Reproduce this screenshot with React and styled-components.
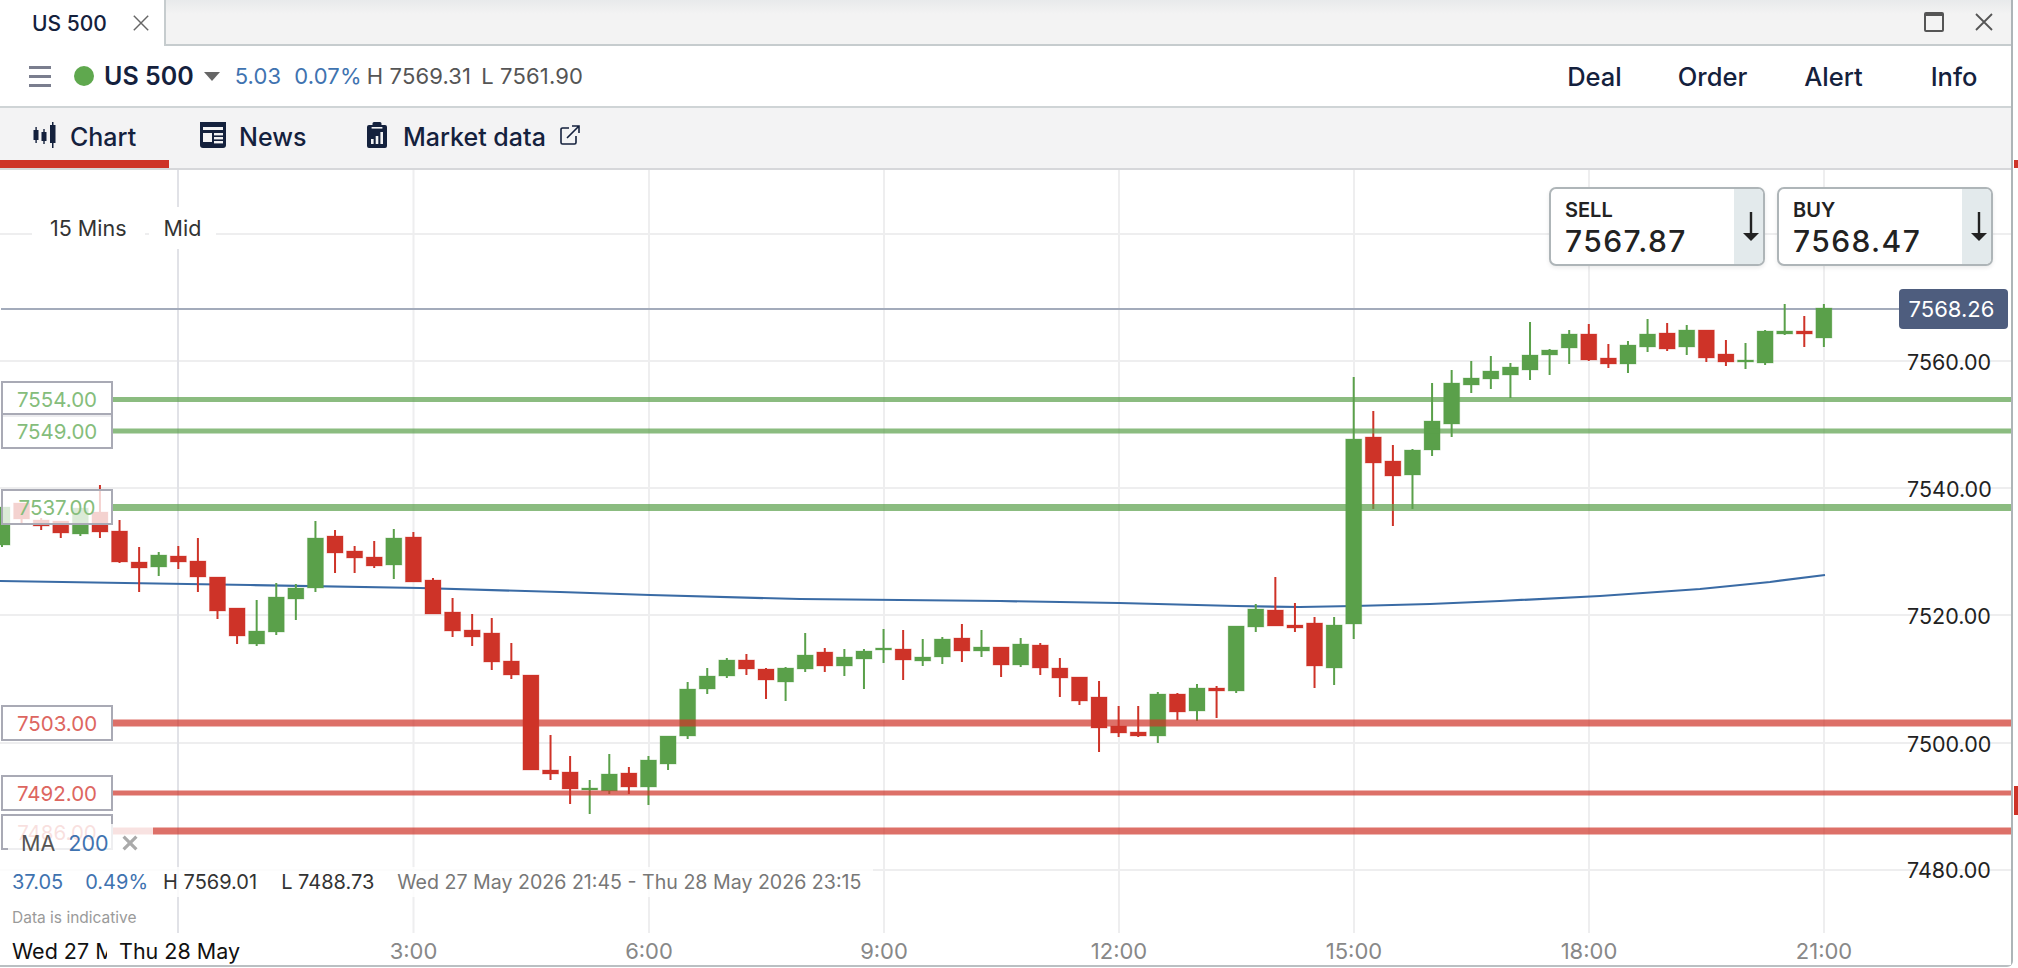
import React from "react";
import styled, { createGlobalStyle } from "styled-components";

const NAVY = "#14213d";
const BLUE = "#3f73b0";
const GREEN = "#5aa04a";
const RED = "#ce3328";

// [direction, body top, body bottom, wick top, wick bottom], page y pixels
const candles = [
  ["g",507,545,507,547],["r",503,519,503,525],["r",520,526,518,530],["r",521,533,521,538],["g",508,534,508,536],
  ["r",512,532,485,538],["r",531,562,520,563],["r",562,568,547,592],["g",555,567,552,576],["r",556,562,546,569],
  ["r",561,577,538,592],["r",577,611,577,619],["r",608,636,608,644],["g",631,644,600,646],["g",597,632,583,635],
  ["g",588,599,584,620],["g",538,588,521,592],["r",536,553,530,573],["r",551,558,546,573],["r",557,566,541,568],
  ["g",538,565,529,579],["r",537,582,532,582],["r",580,614,578,614],["r",612,631,598,637],["r",630,637,614,646],
  ["r",633,662,618,670],["r",661,675,643,679],["r",675,770,675,770],["r",770,774,735,780],["r",772,789,756,804],
  ["g",788,790,780,814],["g",774,791,754,794],["r",773,787,767,794],["g",760,787,756,805],["g",736,764,736,770],
  ["g",689,736,682,739],["g",676,689,668,694],["g",660,676,658,678],["r",660,669,654,675],["r",669,680,668,699],
  ["g",668,682,667,701],["g",655,669,633,672],["r",652,666,648,672],["g",657,666,649,676],["g",651,659,649,689],
  ["g",648,650,629,663],["r",649,660,630,680],["g",657,661,639,666],["g",639,657,637,664],["r",638,651,624,662],
  ["g",647,651,630,657],["r",647,665,647,677],["g",644,665,638,667],["r",645,668,643,675],["r",668,678,658,697],
  ["r",677,701,677,705],["r",697,728,681,752],["r",726,733,706,737],["r",732,736,706,737],["g",694,736,692,743],
  ["r",694,712,693,720],["g",688,711,684,721],["r",688,691,686,718],["g",626,691,626,693],["g",609,627,604,632],
  ["r",610,626,577,626],["r",625,628,603,632],["r",623,666,617,688],["g",625,668,617,685],["g",439,624,377,639],
  ["r",437,463,411,509],["r",461,476,445,526],["g",450,475,449,509],["g",421,450,383,456],["g",383,424,370,437],
  ["g",378,385,361,393],["g",371,379,356,389],["g",367,375,363,398],["g",355,370,322,380],["g",350,355,349,375],
  ["g",334,348,330,364],["r",334,360,324,361],["r",358,364,344,368],["g",345,364,341,373],["g",334,347,319,352],
  ["r",333,349,323,351],["g",330,347,325,355],["r",330,358,330,362],["r",354,362,340,366],["g",360,362,343,369],
  ["g",331,363,330,365],["g",331,334,304,335],["r",331,334,316,347],["g",308,338,304,347],
];

const movingAverage = "0,581 250,585 420,588 560,592 650,595 800,599 1000,601 1119,603 1236,606 1300,607 1354,606 1430,604 1500,601 1600,596 1700,589 1770,582 1825,575";

const levels = [
  { price: "7554.00", y: 399.5, h: 5, kind: "g", box: 381 },
  { price: "7549.00", y: 431, h: 5, kind: "g", box: 413 },
  { price: "7537.00", y: 507.5, h: 7, kind: "g", box: 489 },
  { price: "7503.00", y: 723, h: 7, kind: "r", box: 705 },
  { price: "7492.00", y: 793, h: 5, kind: "r", box: 775 },
  { price: "7486.00", y: 831, h: 7, kind: "r", box: 814 },
];

const gridX = [178, 413.5, 649, 884, 1119, 1354, 1589, 1824];
const gridY = [234, 361, 488, 615, 743, 870];
const times = ["3:00", "6:00", "9:00", "12:00", "15:00", "18:00", "21:00"];
const prices = [
  ["7560.00", 362], ["7540.00", 489], ["7520.00", 616], ["7500.00", 744], ["7480.00", 870],
];
const actions = [["Deal", 121], ["Order", 115], ["Alert", 127], ["Info", 114]];

const GlobalStyle = createGlobalStyle`
  html, body { margin: 0; padding: 0; background: #fff; overflow: hidden; }
  body { font-family: Inter, "Liberation Sans", sans-serif; color: ${NAVY}; }
`;

const Page = styled.div`
  width: 2018px;
  height: 968px;
  display: flex;
  background: #fff;
`;

const Win = styled.div`
  width: 2013px;
  height: 967px;
  box-sizing: border-box;
  display: flex;
  flex-direction: column;
  border-right: 2px solid #aeb5b8;
  border-bottom: 2px solid #b9bfc2;
  border-bottom-right-radius: 6px;
`;

const Sliver = styled.div`
  flex: 1;
  position: relative;
`;

const SliverMark = styled.div`
  position: absolute;
  left: 1px;
  right: 0;
  top: ${p => p.$top}px;
  height: ${p => p.$h}px;
  background: ${RED};
`;

const TabBar = styled.div`
  height: 46px;
  flex: none;
  box-sizing: border-box;
  display: flex;
  background: linear-gradient(#e8eaeb, #f3f3f3 14px);
  border-bottom: 2px solid #c6ccce;
`;

const Tab = styled.div`
  width: 166px;
  height: 46px;
  box-sizing: border-box;
  background: #fff;
  border-right: 2px solid #c6ccce;
  padding-left: 32px;
  display: flex;
  align-items: center;
  font-size: 21px;
  font-weight: 500;
`;

const TabClose = styled.svg`
  width: 18px;
  height: 18px;
  margin-left: 25px;
  stroke: #666;
  stroke-width: 1.6;
  fill: none;
`;

const WindowControls = styled.div`
  margin-left: auto;
  display: flex;
  align-items: center;
  gap: 30px;
  padding-right: 17px;
`;

const Maximise = styled.div`
  width: 20px;
  height: 20px;
  box-sizing: border-box;
  border: 2px solid #555;
  border-top-width: 4px;
  border-radius: 2px;
`;

const WinClose = styled.svg`
  width: 20px;
  height: 20px;
  stroke: #555;
  stroke-width: 1.8;
  fill: none;
`;

const Header = styled.div`
  height: 62px;
  flex: none;
  box-sizing: border-box;
  display: flex;
  align-items: center;
  padding-left: 29px;
  border-bottom: 2px solid #cfd4d6;
`;

const Burger = styled.div`
  width: 22px;
  height: 21px;
  display: flex;
  flex-direction: column;
  justify-content: space-between;
  margin-right: 23px;
`;

const BurgerLine = styled.div`
  height: 3px;
  background: #7a7e8e;
`;

const Dot = styled.div`
  width: 20px;
  height: 20px;
  border-radius: 50%;
  background: #5fa84e;
  margin-right: 10px;
`;

const Instrument = styled.span`
  font-size: 25px;
  font-weight: 600;
  margin-right: 10px;
`;

const Caret = styled.div`
  width: 0;
  height: 0;
  border-left: 8px solid transparent;
  border-right: 8px solid transparent;
  border-top: 9px solid #666;
  margin-right: 15px;
`;

const Stat = styled.span`
  font-size: 22px;
  letter-spacing: 0.15px;
  color: ${p => p.$c || "#555"};
  margin-right: ${p => p.$gap || 0}px;
`;

const Actions = styled.div`
  margin-left: auto;
  display: flex;
`;

const Action = styled.div`
  width: ${p => p.$w}px;
  text-align: center;
  font-size: 25.5px;
  font-weight: 500;
`;

const Nav = styled.div`
  height: 62px;
  flex: none;
  box-sizing: border-box;
  display: flex;
  background: #f3f3f4;
  border-bottom: 2px solid #d6d7da;
`;

const NavTab = styled.div`
  width: ${p => p.$w}px;
  box-sizing: border-box;
  padding-left: ${p => p.$pad}px;
  padding-top: 6px;
  display: flex;
  align-items: center;
  gap: ${p => p.$gap}px;
  font-size: 25px;
  font-weight: 500;
  border-bottom: 8px solid ${p => (p.$active ? RED : "transparent")};
`;

const NavIcon = styled.svg`
  flex: none;
  fill: ${NAVY};
  margin-top: -4px;
`;

const ExternalIcon = styled.svg`
  width: 20px;
  height: 20px;
  margin-left: -2px;
  margin-top: -4px;
  fill: none;
  stroke: ${NAVY};
  stroke-width: 1.6;
`;

const ChartArea = styled.div`
  flex: 1;
  position: relative;
  overflow: hidden;
`;

const Plot = styled.svg`
  position: absolute;
  left: 0;
  top: 0;
  width: 2011px;
  height: 795px;
`;

const Legend = styled.div`
  position: absolute;
  left: 32px;
  top: 37px;
  display: flex;
  gap: 4px;
`;

const LegendChip = styled.div`
  background: #fff;
  padding: 8px ${p => p.$pad}px;
  font-size: 21.5px;
  line-height: 26px;
  color: #333;
`;

const TradeRow = styled.div`
  position: absolute;
  left: 1549px;
  top: 17px;
  display: flex;
  gap: 12px;
`;

const TradeBox = styled.div`
  width: 216px;
  height: 79px;
  box-sizing: border-box;
  display: flex;
  border: 2px solid #aeb5b8;
  border-radius: 7px;
  background: #fff;
  overflow: hidden;
  box-shadow: 0 2px 4px rgba(0, 0, 0, 0.08);
`;

const TradeInfo = styled.div`
  flex: 1;
  padding: 8px 0 0 14px;
  color: #222;
`;

const TradeLabel = styled.div`
  font-size: 20px;
  font-weight: 600;
  line-height: 26px;
`;

const TradeValue = styled.div`
  font-size: 30px;
  line-height: 37px;
  letter-spacing: 1.4px;
  font-weight: 500;
`;

const TradeArrow = styled.div`
  width: 29px;
  box-sizing: border-box;
  padding-left: 4px;
  background: #e3eaec;
  display: flex;
  align-items: center;
  justify-content: center;
`;

const PriceTag = styled.div`
  position: absolute;
  left: 1899px;
  top: 119px;
  width: 109px;
  height: 40px;
  box-sizing: border-box;
  padding-right: 4px;
  border-radius: 4px;
  background: #4e5d7e;
  color: #fff;
  font-size: 22px;
  display: flex;
  align-items: center;
  justify-content: center;
`;

const AxisPrice = styled.div`
  position: absolute;
  left: 1907px;
  top: ${p => p.$y - 170 - 13}px;
  font-size: 21.5px;
  line-height: 26px;
  color: #222;
`;

const LevelBox = styled.div`
  position: absolute;
  left: 1px;
  top: ${p => p.$y - 170}px;
  width: 112px;
  height: 36px;
  box-sizing: border-box;
  border: 2.5px solid #a9aab5;
  background: rgba(255, 255, 255, 0.78);
  color: ${p => (p.$kind === "g" ? "#85bd7b" : "#dd6660")};
  font-size: 20.5px;
  display: flex;
  align-items: center;
  justify-content: center;
`;

const MaPill = styled.div`
  position: absolute;
  left: 8px;
  top: 654px;
  width: 145px;
  height: 30px;
  box-sizing: border-box;
  padding: 8px 0 0 13px;
  background: rgba(255, 255, 255, 0.8);
  display: flex;
  align-items: center;
  font-size: 21.5px;
`;

const MaName = styled.span`
  color: #555;
  margin-right: 13px;
`;

const MaValue = styled.span`
  color: ${BLUE};
  margin-right: 13px;
`;

const MaClose = styled.svg`
  width: 16px;
  height: 16px;
  stroke: #aaa;
  stroke-width: 4;
  fill: none;
`;

const InfoRow = styled.div`
  position: absolute;
  left: 0;
  top: 697px;
  height: 30px;
  padding: 0 12px;
  display: flex;
  align-items: center;
  background: rgba(255, 255, 255, 0.82);
  font-size: 20px;
  white-space: nowrap;
`;

const InfoStat = styled.span`
  color: ${p => p.$c};
  margin-right: ${p => p.$gap}px;
`;

const InfoRange = styled.span`
  color: #777;
  font-size: 19.6px;
`;

const Indicative = styled.div`
  position: absolute;
  left: 12px;
  top: 739px;
  font-size: 15.5px;
  line-height: 18px;
  color: #9a9a9a;
`;

const TimeAxis = styled.div`
  position: absolute;
  left: 0;
  right: 0;
  bottom: 0;
  height: 32px;
  background: #fff;
  font-size: 22px;
`;

const DayLabel = styled.span`
  position: absolute;
  left: ${p => p.$left}px;
  width: ${p => p.$w}px;
  top: 5px;
  font-size: 21.5px;
  overflow: hidden;
  white-space: nowrap;
  color: #111;
`;

const TimeLabel = styled.span`
  position: absolute;
  left: ${p => p.$x}px;
  top: 5px;
  transform: translateX(-50%);
  color: #888;
`;

const Cross = ({ as: Comp, viewBox = "0 0 20 20" }) => (
  <Comp viewBox={viewBox}>
    <path d="M2 2 L18 18 M18 2 L2 18" />
  </Comp>
);

const TradeDown = () => (
  <svg width="18" height="32" viewBox="0 0 18 32" fill="none" stroke="#222" strokeWidth="2.4">
    <path d="M9 1 V27" />
    <path d="M1 22 L9 30 L17 22 Z" fill="#222" stroke="none" />
  </svg>
);

const CandlesIcon = () => (
  <NavIcon width="24" height="26" viewBox="0 0 24 26">
    <rect x="0.5" y="8" width="5" height="10" />
    <rect x="2.4" y="5" width="1.4" height="16" />
    <rect x="8.5" y="10" width="5" height="9" />
    <rect x="10.3" y="7" width="1.4" height="15" />
    <rect x="17" y="3" width="5.5" height="18" />
    <rect x="19" y="0" width="1.5" height="26" />
  </NavIcon>
);

const NewsIcon = () => (
  <NavIcon width="26" height="26" viewBox="0 0 26 26">
    <path d="M0 0 H26 V23 A3 3 0 0 1 23 26 H3 A3 3 0 0 1 0 23 Z" />
    <rect x="3" y="5" width="20" height="3" fill="#f3f3f4" />
    <rect x="3" y="11" width="9" height="9" fill="#f3f3f4" />
    <rect x="14" y="11" width="9" height="2.4" fill="#f3f3f4" />
    <rect x="14" y="15" width="9" height="2.4" fill="#f3f3f4" />
    <rect x="14" y="19" width="9" height="2.4" fill="#f3f3f4" />
  </NavIcon>
);

const MarketIcon = () => (
  <NavIcon width="20" height="26" viewBox="0 0 20 26">
    <path d="M2 3 H5.5 V1.5 A1.5 1.5 0 0 1 7 0 H13 A1.5 1.5 0 0 1 14.5 1.5 V3 H18 A2 2 0 0 1 20 5 V24 A2 2 0 0 1 18 26 H2 A2 2 0 0 1 0 24 V5 A2 2 0 0 1 2 3 Z" />
    <rect x="4.6" y="5" width="10.8" height="1.6" fill="#f3f3f4" />
    <rect x="4" y="17" width="2.6" height="5" fill="#f3f3f4" />
    <rect x="8.7" y="14" width="2.6" height="8" fill="#f3f3f4" />
    <rect x="13.4" y="10" width="2.6" height="12" fill="#f3f3f4" />
  </NavIcon>
);

const Chart = () => (
  <Plot viewBox="0 170 2011 795">
    {gridY.map(y => (
      <line key={y} x1="0" x2="2011" y1={y} y2={y} stroke="#eeeeef" strokeWidth="2" />
    ))}
    {gridX.map((x, i) => (
      <line key={x} x1={x} x2={x} y1="170" y2="933" stroke={i === 0 ? "#e1e2e7" : "#eeeeef"} strokeWidth="2" />
    ))}
    <line x1="1" x2="1900" y1="309" y2="309" stroke="#a3abbb" strokeWidth="2" />
    <polyline points={movingAverage} fill="none" stroke="#3a6ba5" strokeWidth="2.2" strokeLinejoin="round" />
    {candles.map(([dir, top, bottom, hi, lo], i) => {
      const x = 2 + 19.59 * i;
      const colour = dir === "g" ? GREEN : RED;
      return (
        <g key={i} fill={colour}>
          <rect x={x - 1} y={hi} width="2" height={lo - hi} />
          <rect x={x - 8} y={top} width="16" height={bottom - top} stroke={colour} strokeOpacity="0.3" />
        </g>
      );
    })}
    {levels.map(l => (
      <rect
        key={l.price}
        x="112"
        y={l.y - l.h / 2}
        width="1899"
        height={l.h}
        fill={l.kind === "g" ? "rgba(90,160,74,0.7)" : "rgba(206,51,40,0.7)"}
      />
    ))}
  </Plot>
);

export default function App() {
  return (
    <Page>
      <GlobalStyle />
      <Win>
        <TabBar>
          <Tab>
            US 500
            <Cross as={TabClose} />
          </Tab>
          <WindowControls>
            <Maximise />
            <Cross as={WinClose} />
          </WindowControls>
        </TabBar>
        <Header>
          <Burger>
            <BurgerLine />
            <BurgerLine />
            <BurgerLine />
          </Burger>
          <Dot />
          <Instrument>US 500</Instrument>
          <Caret />
          <Stat $c={BLUE} $gap={13}>5.03</Stat>
          <Stat $c={BLUE} $gap={5}>0.07%</Stat>
          <Stat $gap={10}>H 7569.31</Stat>
          <Stat>L 7561.90</Stat>
          <Actions>
            {actions.map(([label, width]) => (
              <Action key={label} $w={width}>{label}</Action>
            ))}
          </Actions>
        </Header>
        <Nav>
          <NavTab $w={169} $pad={33} $gap={13} $active>
            <CandlesIcon />
            Chart
          </NavTab>
          <NavTab $w={198} $pad={31} $gap={13}>
            <NewsIcon />
            News
          </NavTab>
          <NavTab $w={300} $gap={16}>
            <MarketIcon />
            Market data
            <ExternalIcon viewBox="0 0 20 20">
              <path d="M9 3 H2.5 A1.5 1.5 0 0 0 1 4.5 V17.5 A1.5 1.5 0 0 0 2.5 19 H14.5 A1.5 1.5 0 0 0 16 17.5 V11" />
              <path d="M7 13 L19 1 M12 1 H19 V8" />
            </ExternalIcon>
          </NavTab>
        </Nav>
        <ChartArea>
          <Chart />
          <Legend>
            <LegendChip $pad={18}>15 Mins</LegendChip>
            <LegendChip $pad={15}>Mid</LegendChip>
          </Legend>
          <TradeRow>
            <TradeBox>
              <TradeInfo>
                <TradeLabel>SELL</TradeLabel>
                <TradeValue>7567.87</TradeValue>
              </TradeInfo>
              <TradeArrow>
                <TradeDown />
              </TradeArrow>
            </TradeBox>
            <TradeBox>
              <TradeInfo>
                <TradeLabel>BUY</TradeLabel>
                <TradeValue>7568.47</TradeValue>
              </TradeInfo>
              <TradeArrow>
                <TradeDown />
              </TradeArrow>
            </TradeBox>
          </TradeRow>
          <PriceTag>7568.26</PriceTag>
          {prices.map(([label, y]) => (
            <AxisPrice key={label} $y={y}>{label}</AxisPrice>
          ))}
          {levels.map(l => (
            <LevelBox key={l.price} $y={l.box} $kind={l.kind}>{l.price}</LevelBox>
          ))}
          <MaPill>
            <MaName>MA</MaName>
            <MaValue>200</MaValue>
            <Cross as={MaClose} />
          </MaPill>
          <InfoRow>
            <InfoStat $c={BLUE} $gap={22}>37.05</InfoStat>
            <InfoStat $c={BLUE} $gap={15}>0.49%</InfoStat>
            <InfoStat $c="#333" $gap={24}>H 7569.01</InfoStat>
            <InfoStat $c="#333" $gap={23}>L 7488.73</InfoStat>
            <InfoRange>Wed 27 May 2026 21:45 - Thu 28 May 2026 23:15</InfoRange>
          </InfoRow>
          <Indicative>Data is indicative</Indicative>
          <TimeAxis>
            <DayLabel $left={12} $w={95}>Wed 27 May</DayLabel>
            <DayLabel $left={119} $w={130}>Thu 28 May</DayLabel>
            {times.map((t, i) => (
              <TimeLabel key={t} $x={gridX[i + 1]}>{t}</TimeLabel>
            ))}
          </TimeAxis>
        </ChartArea>
      </Win>
      <Sliver>
        <SliverMark $top={160} $h={8} />
        <SliverMark $top={786} $h={29} />
      </Sliver>
    </Page>
  );
}
